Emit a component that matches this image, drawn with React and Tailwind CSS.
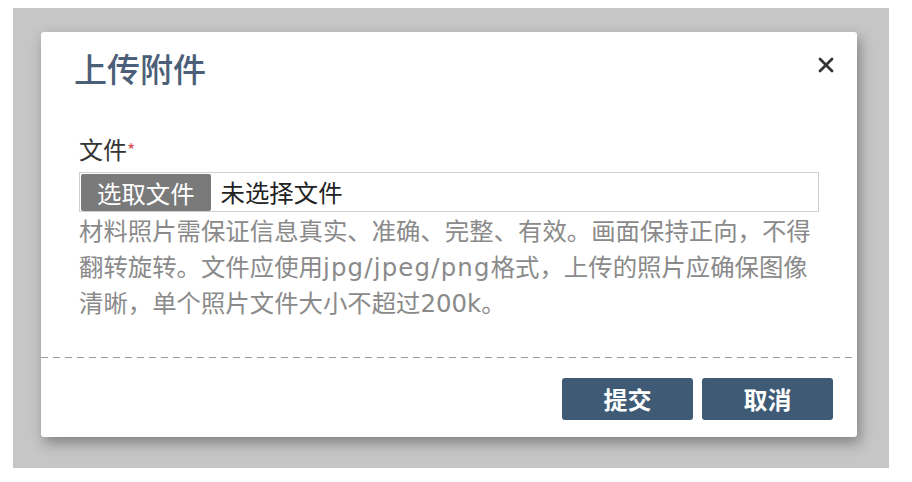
const FONT = "font-['Noto_Sans_CJK_SC','Noto_Sans',sans-serif]";
const HINT_FONT = "font-['DejaVu_Sans','Noto_Sans_CJK_SC',sans-serif]";

function CloseIcon() {
  return (
    <svg width="18" height="18" viewBox="0 0 18 18" className="text-[#333]">
      <path d="M3 3 L15 15 M15 3 L3 15" stroke="currentColor" strokeWidth="2.8" strokeLinecap="round" />
    </svg>
  );
}

export default function App() {
  return (
    <div className={`w-[912px] h-[482px] bg-white pt-2 pl-[13px] ${FONT}`}>
      <div className="w-[876px] h-[460px] bg-[#c6c6c6] pt-6 pl-7">
        <div className="w-[816px] h-[405px] bg-white rounded-[3px] shadow-[3px_6px_14px_rgba(0,0,0,0.35)] flex flex-col">
          <div className="flex items-center justify-between pl-[33px] pr-[22px] pt-3 h-[60px]">
            <h2 className="text-[33px] leading-[48px] font-medium text-[#4b6078]">上传附件</h2>
            <button className="mt-[-6px]">
              <CloseIcon />
            </button>
          </div>

          <div className="pl-[38px] pr-[38px] pt-[39px]">
            <label className="block text-[24px] leading-[36px] text-[#333]">
              文件<span className="text-[#d9534f] text-[18px] align-top">*</span>
            </label>
            <div className="mt-[5px] h-10 border border-[#cfcfcf] flex items-center px-px">
              <span className="h-[37px] px-4 bg-[#7a7a7a] rounded-[2px] text-white text-[24.4px] leading-[37px]">
                选取文件
              </span>
              <span className="ml-[10px] text-[24.4px] text-[#222]">未选择文件</span>
            </div>
            <p className={`mt-[2px] text-[24.4px] leading-[36px] text-[#8a8a8a] ${HINT_FONT}`}>
              材料照片需保证信息真实、准确、完整、有效。画面保持正向，不得翻转旋转。文件应使用
              <span className="tracking-[1.2px]">jpg/jpeg/png</span>
              格式，上传的照片应确保图像清晰，单个照片文件大小不超过200k。
            </p>
          </div>

          <div className="mt-[35px] h-px bg-[linear-gradient(to_right,#9a9a9a_60%,transparent_0)] bg-[length:12px_1px]" />

          <div className="flex justify-end gap-[9px] pt-5 pr-6">
            <button className="w-[131px] h-[42px] rounded-[3px] bg-[#3e5a75] text-white text-[24px] font-bold">
              提交
            </button>
            <button className="w-[131px] h-[42px] rounded-[3px] bg-[#3e5a75] text-white text-[24px] font-bold">
              取消
            </button>
          </div>
        </div>
      </div>
    </div>
  );
}
